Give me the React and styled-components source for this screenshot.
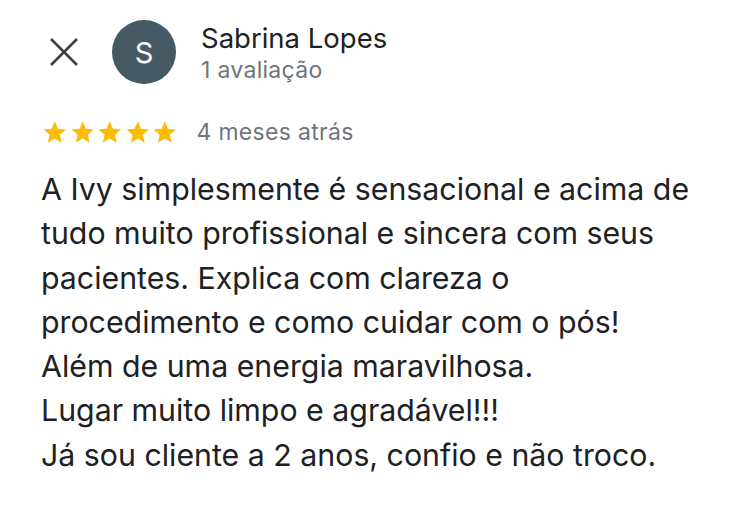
import styled, { createGlobalStyle } from 'styled-components';

const Global = createGlobalStyle`
  body {
    margin: 0;
    background: #fff;
    font-family: Inter, "Noto Sans", sans-serif;
  }
`;

const Card = styled.div`
  width: 750px;
  height: 508px;
  box-sizing: border-box;
  padding: 19px 0 0 41px;
  background: #fff;
`;

const Header = styled.div`
  display: flex;
  align-items: center;
`;

const Close = styled.button`
  border: 0;
  background: none;
  padding: 0;
  width: 46px;
  height: 46px;
  display: flex;
  align-items: center;
  justify-content: center;
  color: #3c4043;
  margin-right: 25px;
`;

const Avatar = styled.div`
  width: 64px;
  height: 64px;
  border-radius: 50%;
  background: #455a64;
  color: #fff;
  font-size: 29px;
  display: flex;
  align-items: center;
  justify-content: center;
  margin-right: 25px;
`;

const Who = styled.div`
  display: flex;
  flex-direction: column;
  margin-top: 2px;
`;

const Name = styled.div`
  font-size: 27.5px;
  color: #202124;
  line-height: 34px;
`;

const Sub = styled.div`
  font-size: 23px;
  letter-spacing: 0.3px;
  color: #70757a;
  line-height: 30px;
`;

const Meta = styled.div`
  display: flex;
  align-items: center;
  margin-top: 32px;
  gap: 18px;
`;

const Stars = styled.div`
  display: flex;
  gap: 0;
`;

const Body = styled.p`
  margin: 20px 0 0;
  font-size: 30.3px;
  line-height: 44.3px;
  color: #202124;
  white-space: pre-line;
`;

const Star = () => (
  <svg width="27.5" height="27" viewBox="0 0 24 24">
    <path fill="#fbbc04" d="M12 17.27L18.18 21l-1.64-7.03L22 9.24l-7.19-.61L12 2 9.19 8.63 2 9.24l5.46 4.73L5.82 21z" />
  </svg>
);

const text = `A Ivy simplesmente é sensacional e acima de
tudo muito profissional e sincera com seus
pacientes. Explica com clareza o
procedimento e como cuidar com o pós!
Além de uma energia maravilhosa.
Lugar muito limpo e agradável!!!
Já sou cliente a 2 anos, confio e não troco.`;

export default function App() {
  return (
    <Card>
      <Global />
      <Header>
        <Close>
          <svg width="28" height="28" viewBox="0 0 28 28">
            <path d="M1 1L27 27M27 1L1 27" stroke="currentColor" strokeWidth="2.6" />
          </svg>
        </Close>
        <Avatar>S</Avatar>
        <Who>
          <Name>Sabrina Lopes</Name>
          <Sub>1 avaliação</Sub>
        </Who>
      </Header>
      <Meta>
        <Stars>
          {[0, 1, 2, 3, 4].map(i => <Star key={i} />)}
        </Stars>
        <Sub>4 meses atrás</Sub>
      </Meta>
      <Body>{text}</Body>
    </Card>
  );
}
